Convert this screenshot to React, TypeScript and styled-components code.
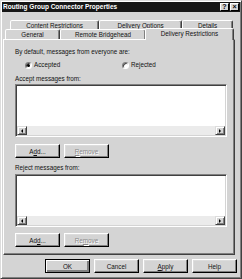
import React from 'react'
import styled, { createGlobalStyle, css } from 'styled-components'

const GlobalStyle = createGlobalStyle`
  html, body {
    margin: 0;
    padding: 0;
    background: #d4d4d4;
  }
  body {
    font-family: 'Liberation Sans', Arial, sans-serif;
    font-size: 6.3px;
    color: #111;
  }
  * {
    box-sizing: border-box;
  }
`

const Window = styled.div`
  width: 242px;
  height: 279px;
  padding: 1px;
  background: #d4d4d4;
  border: 1px solid;
  border-color: #dcdcdc #404040 #404040 #dcdcdc;
  box-shadow: inset 1px 1px #fff, inset -1px -1px #808080;
  display: flex;
  flex-direction: column;
`

const TitleBar = styled.div`
  height: 10px;
  flex-shrink: 0;
  background: #161616;
  display: flex;
  align-items: center;
  justify-content: space-between;
  padding: 0 1px;
`

const Title = styled.span`
  color: #fff;
  font-weight: bold;
  font-size: 6.5px;
  line-height: 10px;
  white-space: nowrap;
`

const CapButtons = styled.div`
  display: flex;
  gap: 1px;
`

const CapButton = styled.span`
  width: 9px;
  height: 8px;
  background: #d4d4d4;
  border: 1px solid;
  border-color: #fff #000 #000 #fff;
  font-size: 7px;
  font-weight: bold;
  line-height: 6px;
  text-align: center;
  color: #000;
`

const Body = styled.div`
  flex: 1;
  display: flex;
  flex-direction: column;
  padding: 8px 3px 0 1px;
`

const TabRow = styled.div<{ $indent: number; $height: number }>`
  display: flex;
  height: ${p => p.$height}px;
  margin-left: ${p => p.$indent}px;
`

const Tab = styled.div<{ $w: number; $active?: boolean }>`
  width: ${p => p.$w}px;
  border: 1px solid;
  border-bottom: none;
  border-color: #fff #404040 transparent #fff;
  border-radius: 2px 2px 0 0;
  box-shadow: inset -1px 0 #808080;
  background: #d4d4d4;
  display: flex;
  align-items: center;
  justify-content: center;
  white-space: nowrap;
  ${p =>
    p.$active &&
    css`
      position: relative;
      z-index: 1;
      height: 12px;
      margin: -1px 0 -1px -1px;
      padding-bottom: 2px;
    `}
`

const Panel = styled.div`
  margin-right: 2px;
  border: 1px solid;
  border-color: #fff #404040 #404040 #fff;
  box-shadow: inset -1px -1px #808080;
  padding: 8px 7px 7px 11px;
  display: flex;
  flex-direction: column;
`

const Label = styled.div<{ $gap?: number }>`
  line-height: 8px;
  height: 8px;
  margin-top: ${p => p.$gap ?? 0}px;
  white-space: nowrap;
`

const RadioRow = styled.div`
  display: flex;
  height: 8px;
  margin-top: 5px;
  padding-left: 10px;
`

const RadioItem = styled.label`
  width: 97px;
  display: flex;
  align-items: center;
  gap: 2px;
  line-height: 8px;
`

const RadioCircle = styled.span<{ $checked?: boolean }>`
  width: 7px;
  height: 7px;
  border-radius: 50%;
  background: #fff;
  border: 1px solid;
  border-color: #808080 #fff #fff #808080;
  box-shadow: inset 1px 1px #404040;
  display: flex;
  align-items: center;
  justify-content: center;
  &::after {
    content: '';
    width: 3px;
    height: 3px;
    border-radius: 50%;
    background: ${p => (p.$checked ? '#000' : 'transparent')};
  }
`

const ListBox = styled.div<{ $gap: number }>`
  height: 53px;
  margin-top: ${p => p.$gap}px;
  border: 1px solid;
  border-color: #808080 #fff #fff #808080;
  box-shadow: inset 1px 1px #404040, inset -1px -1px #d4d4d4;
  padding: 1px;
  background: #fff;
  display: flex;
  flex-direction: column;
`

const ListArea = styled.div`
  flex: 1;
`

const HScroll = styled.div`
  height: 9px;
  display: flex;
  background: #ebebeb;
`

const ScrollArrow = styled.span<{ $dir: 'left' | 'right' }>`
  width: 10px;
  height: 9px;
  background: #d4d4d4;
  border: 1px solid;
  border-color: #dcdcdc #404040 #404040 #dcdcdc;
  box-shadow: inset 1px 1px #fff, inset -1px -1px #808080;
  display: flex;
  align-items: center;
  justify-content: center;
  &::after {
    content: '';
    border-top: 2.5px solid transparent;
    border-bottom: 2.5px solid transparent;
    ${p =>
      p.$dir === 'left'
        ? css`border-right: 2.5px solid #000;`
        : css`border-left: 2.5px solid #000;`}
  }
`

const ScrollTrack = styled.span`
  flex: 1;
`

const ActionRow = styled.div<{ $gap: number }>`
  display: flex;
  gap: 4px;
  margin-top: ${p => p.$gap}px;
`

const Button = styled.button<{ $default?: boolean }>`
  width: 45px;
  height: 14px;
  padding: 0;
  font: inherit;
  color: #111;
  background: #d4d4d4;
  border: 1px solid;
  border-color: #fff #000 #000 #fff;
  box-shadow: inset -1px -1px #808080, inset 1px 1px #dcdcdc;
  &:disabled {
    color: #8a8a8a;
    text-shadow: 1px 1px #fff;
  }
  ${p =>
    p.$default &&
    css`
      border-color: #000;
      box-shadow: inset 1px 1px #fff, inset -2px -2px #808080;
    `}
`

const DialogButtons = styled.div`
  display: flex;
  justify-content: flex-end;
  gap: 4px;
  margin-top: 4px;
`

const U = styled.span`
  text-decoration: underline;
`

const ScrollList = ({ gap }: { gap: number }) => (
  <ListBox $gap={gap}>
    <ListArea />
    <HScroll>
      <ScrollArrow $dir="left" />
      <ScrollTrack />
      <ScrollArrow $dir="right" />
    </HScroll>
  </ListBox>
)

const App = () => {
  return (
    <>
      <GlobalStyle />
      <Window>
        <TitleBar>
          <Title>Routing Group Connector Properties</Title>
          <CapButtons>
            <CapButton>?</CapButton>
            <CapButton>×</CapButton>
          </CapButtons>
        </TitleBar>
        <Body>
          <TabRow $indent={7} $height={9}>
            <Tab $w={89}>Content Restrictions</Tab>
            <Tab $w={83}>Delivery Options</Tab>
            <Tab $w={51}>Details</Tab>
          </TabRow>
          <TabRow $indent={2} $height={10}>
            <Tab $w={55}>General</Tab>
            <Tab $w={86}>Remote Bridgehead</Tab>
            <Tab $w={89} $active>
              Delivery Restrictions
            </Tab>
          </TabRow>
          <Panel>
            <Label>By default, messages from everyone are:</Label>
            <RadioRow>
              <RadioItem>
                <RadioCircle $checked />
                <span>Accepted</span>
              </RadioItem>
              <RadioItem>
                <RadioCircle />
                <span>Rejected</span>
              </RadioItem>
            </RadioRow>
            <Label $gap={6}>Accept messages from:</Label>
            <ScrollList gap={1} />
            <ActionRow $gap={7}>
              <Button>
                A<U>d</U>d...
              </Button>
              <Button disabled>
                <U>R</U>emove
              </Button>
            </ActionRow>
            <Label $gap={6}>Reject messages from:</Label>
            <ScrollList gap={2} />
            <ActionRow $gap={6}>
              <Button>
                Ad<U>d</U>...
              </Button>
              <Button disabled>
                Re<U>m</U>ove
              </Button>
            </ActionRow>
          </Panel>
          <DialogButtons>
            <Button $default>OK</Button>
            <Button>Cancel</Button>
            <Button>
              <U>A</U>pply
            </Button>
            <Button>Help</Button>
          </DialogButtons>
        </Body>
      </Window>
    </>
  )
}

export default App
